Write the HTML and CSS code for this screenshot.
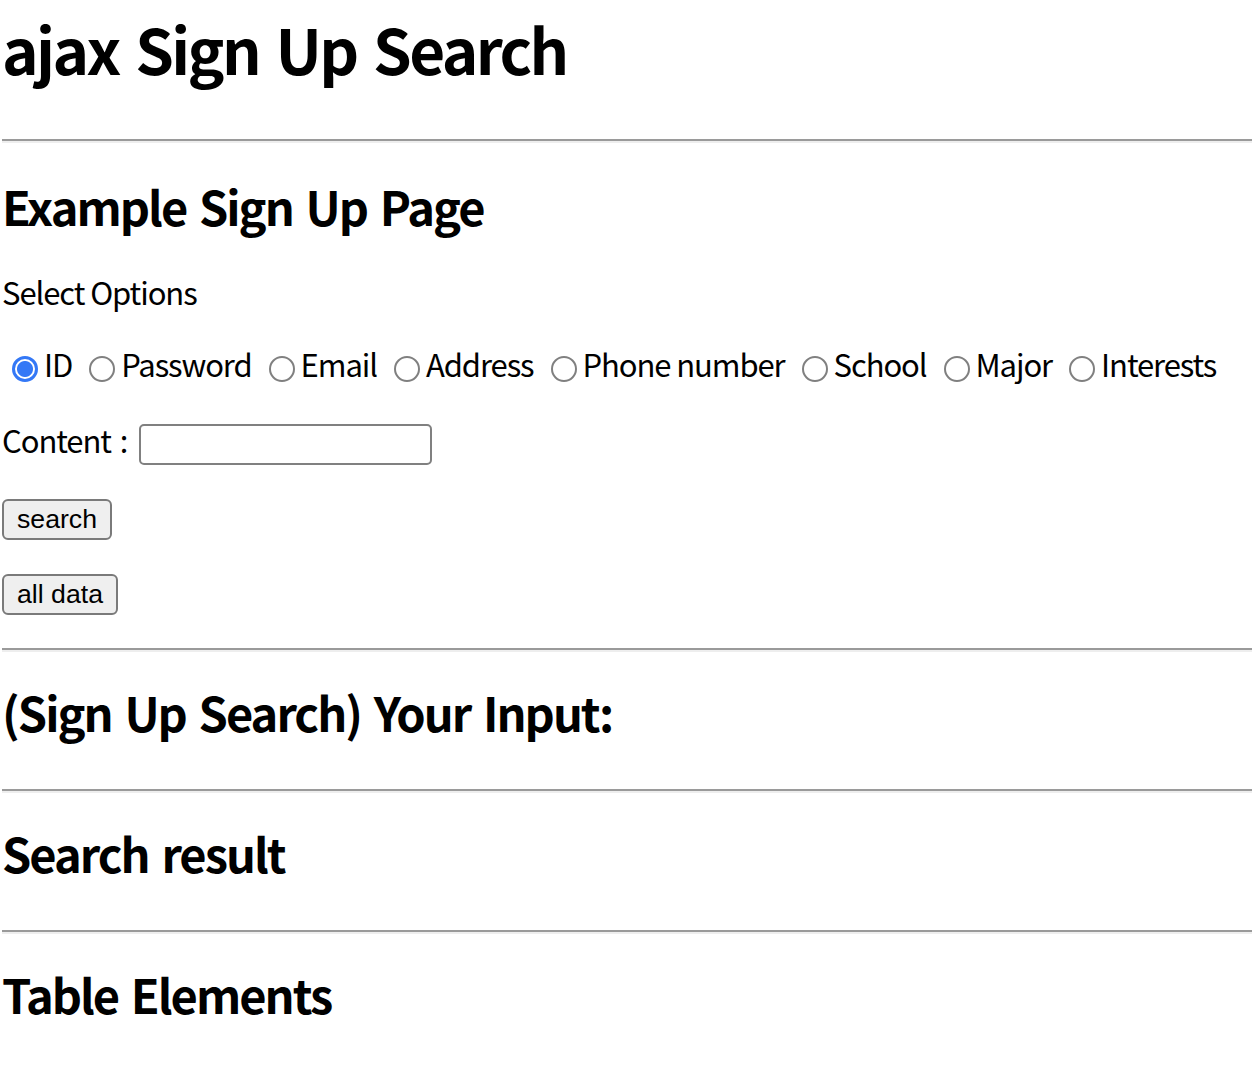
FILE: index.html
```html
<!DOCTYPE html>
<html lang="en">
<head>
<meta charset="utf-8">
<title>ajax Sign Up Search</title>
<link rel="stylesheet" href="styles.css">
</head>
<body>
<main class="page">
  <h1 class="title">ajax Sign Up Search</h1>
  <hr class="rule rule-first">
  <h2 class="heading heading-first">Example Sign Up Page</h2>
  <p class="text select-label">Select Options</p>
  <div class="options">
    <label class="opt"><input class="radio" type="radio" name="field" value="id" checked>ID</label>
    <label class="opt"><input class="radio" type="radio" name="field" value="password">Password</label>
    <label class="opt"><input class="radio" type="radio" name="field" value="email">Email</label>
    <label class="opt"><input class="radio" type="radio" name="field" value="address">Address</label>
    <label class="opt"><input class="radio" type="radio" name="field" value="phone">Phone number</label>
    <label class="opt"><input class="radio" type="radio" name="field" value="school">School</label>
    <label class="opt"><input class="radio" type="radio" name="field" value="major">Major</label>
    <label class="opt"><input class="radio" type="radio" name="field" value="interests">Interests</label>
  </div>
  <div class="content-row">
    <span class="text content-label">Content :</span>
    <input class="content-input" type="text">
  </div>
  <div class="btn-row btn-row-first"><button class="btn" type="button">search</button></div>
  <div class="btn-row"><button class="btn" type="button">all data</button></div>
  <hr class="rule rule-after-buttons">
  <h2 class="heading">(Sign Up Search) Your Input:</h2>
  <hr class="rule">
  <h2 class="heading">Search result</h2>
  <hr class="rule">
  <h2 class="heading">Table Elements</h2>
</main>
</body>
</html>
```
FILE: styles.css
```css
html, body {
  margin: 0;
  padding: 0;
  background: #ffffff;
}

body {
  color: #000000;
  font-family: "Noto Sans CJK KR", "Noto Sans", sans-serif;
}

.page {
  display: flex;
  flex-direction: column;
  align-items: stretch;
  padding: 10px 0 0 2px;
}

.title {
  margin: 0;
  font-size: 62px;
  line-height: 76px;
  font-weight: 700;
  letter-spacing: -0.042em;
  word-spacing: 5px;
}

.rule {
  margin: 49px 0 0 0;
  height: 0;
  border: none;
  border-top: 2px solid #9a9a9a;
  border-bottom: 2px solid #eeeeee;
}

.rule-first {
  margin-top: 53px;
}

.rule-after-buttons {
  margin-top: 33px;
}

.heading {
  margin: 31px 0 0 0;
  font-size: 47px;
  line-height: 57px;
  font-weight: 700;
  letter-spacing: -0.042em;
  word-spacing: 4px;
}

.heading-first {
  margin-top: 34px;
}

.text {
  font-size: 31px;
  line-height: 38px;
  letter-spacing: -0.035em;
}

.select-label {
  margin: 39px 0 0 0;
}

.options {
  margin-top: 34px;
  display: flex;
  flex-wrap: nowrap;
  align-items: flex-start;
  font-size: 31px;
  line-height: 38px;
  letter-spacing: -0.035em;
  white-space: nowrap;
}

.opt {
  display: inline-flex;
  align-items: flex-start;
  margin-right: 7px;
}

.radio {
  appearance: none;
  -webkit-appearance: none;
  box-sizing: border-box;
  width: 26px;
  height: 26px;
  margin: 11px 6px 0 10px;
  border: 2px solid #808080;
  border-radius: 50%;
  background: #ffffff;
  flex: none;
}

.radio:checked {
  border: 3px solid #3478f6;
  background: radial-gradient(circle, #3478f6 0 7.5px, #ffffff 8.5px);
}

.content-row {
  margin-top: 41px;
  display: flex;
  align-items: flex-start;
}

.content-label {
  line-height: 32px;
  margin-right: 12px;
  word-spacing: 3px;
}

.content-input {
  box-sizing: border-box;
  width: 293px;
  height: 41px;
  margin: 0;
  border: 2px solid #808080;
  border-radius: 5px;
  background: #ffffff;
  padding: 0 6px;
  font-size: 26px;
}

.btn-row {
  margin-top: 34px;
  display: flex;
}

.btn {
  box-sizing: border-box;
  height: 41px;
  margin: 0;
  padding: 0 13px;
  border: 2px solid #7a7a7a;
  border-radius: 6px;
  background: #efefef;
  color: #000000;
  font-family: "Liberation Sans", Arial, sans-serif;
  font-size: 26.67px;
  line-height: 35px;
}
```
